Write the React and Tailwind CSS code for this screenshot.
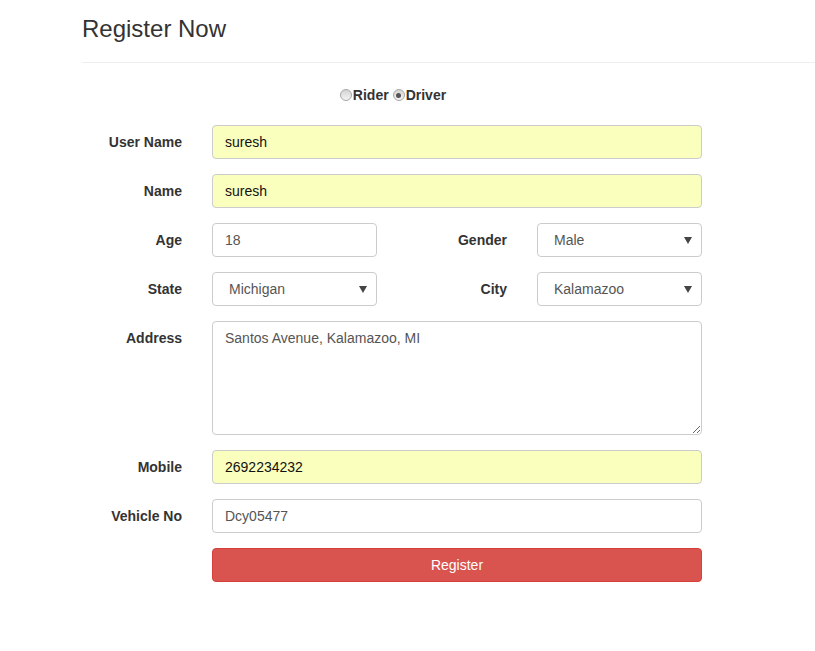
import React from "react";

const font = { fontFamily: '"Liberation Sans", Arial, Helvetica, sans-serif' };

function Label({ children, className = "" }) {
  return (
    <label className={`shrink-0 text-right pr-[30px] text-[14px] font-bold text-[#333] leading-[20px] ${className}`}>
      {children}
    </label>
  );
}

function TextInput({ value, filled, className = "" }) {
  return (
    <input
      readOnly
      value={value}
      className={`h-[34px] rounded-[4px] border border-[#ccc] px-[12px] text-[14px] outline-none ${
        filled ? "bg-[#faffbd] text-[#111]" : "bg-white text-[#555]"
      } ${className}`}
      style={font}
    />
  );
}

function Select({ value }) {
  return (
    <div className="relative w-[165px] h-[34px] rounded-[4px] border border-[#ccc] bg-white flex items-center pl-[16px] text-[14px] text-[#555]">
      {value}
      <svg className="absolute right-[9px] top-[13px]" width="8" height="7" viewBox="0 0 8 7">
        <path d="M0 0 H8 L4 7 Z" fill="#444" />
      </svg>
    </div>
  );
}

function Radio({ checked }) {
  return (
    <span className="relative inline-block w-[12px] h-[12px] rounded-full border border-[#a6a6a6] bg-gradient-to-b from-[#d4d4d4] to-[#f4f4f4] mr-[1px]">
      {checked && (
        <span className="absolute left-[2.5px] top-[2.5px] w-[5px] h-[5px] rounded-full bg-[#555]" />
      )}
    </span>
  );
}

export default function App() {
  return (
    <div className="min-h-screen bg-white pl-[82px]" style={font}>
      {/* Header */}
      <div className="pt-[16px]">
        <h3 className="text-[24px] leading-[26.4px] text-[#333] font-normal">Register Now</h3>
        <div className="mt-[20px] border-t border-[#eee]" />
      </div>

      {/* Role */}
      <div className="w-[620px] mt-[22px] flex items-center justify-center text-[14px] font-bold text-[#333] leading-[20px]">
        <div className="flex items-center ml-[2px]">
          <Radio />
          <span className="mr-[4px]">Rider</span>
          <Radio checked />
          <span>Driver</span>
        </div>
      </div>

      {/* Form */}
      <form className="mt-[20px] w-[620px] flex flex-col gap-[15px]">
        <div className="flex items-center">
          <Label className="w-[130px]">User Name</Label>
          <TextInput value="suresh" filled className="w-[490px]" />
        </div>
        <div className="flex items-center">
          <Label className="w-[130px]">Name</Label>
          <TextInput value="suresh" filled className="w-[490px]" />
        </div>
        <div className="flex items-center">
          <Label className="w-[130px]">Age</Label>
          <TextInput value="18" className="w-[165px]" />
          <Label className="w-[160px]">Gender</Label>
          <Select value="Male" />
        </div>
        <div className="flex items-center">
          <Label className="w-[130px]">State</Label>
          <Select value="Michigan" />
          <Label className="w-[160px]">City</Label>
          <Select value="Kalamazoo" />
        </div>
        <div className="flex items-start">
          <Label className="w-[130px] pt-[7px]">Address</Label>
          <textarea
            readOnly
            value="Santos Avenue, Kalamazoo, MI"
            className="w-[490px] h-[114px] rounded-[4px] border border-[#ccc] px-[12px] py-[6px] text-[14px] leading-[20px] text-[#555] outline-none resize-y"
            style={font}
          />
        </div>
        <div className="flex items-center">
          <Label className="w-[130px]">Mobile</Label>
          <TextInput value="2692234232" filled className="w-[490px]" />
        </div>
        <div className="flex items-center">
          <Label className="w-[130px]">Vehicle No</Label>
          <TextInput value="Dcy05477" className="w-[490px]" />
        </div>
        <div className="flex items-center">
          <div className="w-[130px] shrink-0" />
          <button
            type="button"
            className="w-[490px] h-[34px] rounded-[4px] border border-[#d43f3a] bg-[#d9534f] text-white text-[14px]"
            style={font}
          >
            Register
          </button>
        </div>
      </form>
    </div>
  );
}
